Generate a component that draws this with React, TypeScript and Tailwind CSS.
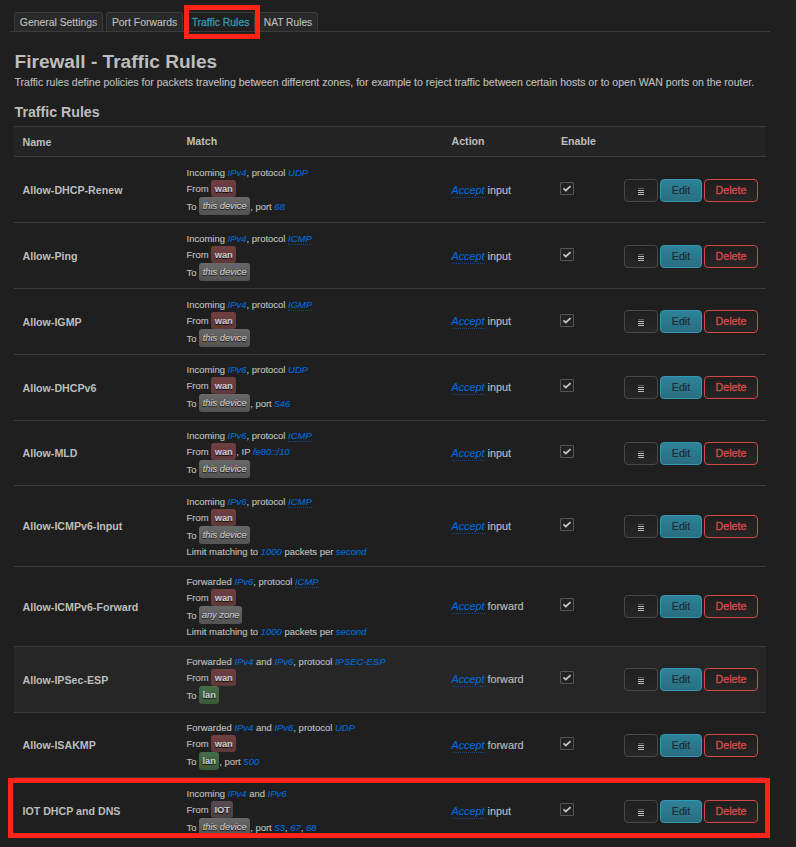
import React from "react";

type Part = string | { v: string; tip?: boolean } | { zone: "wan" | "lan" | "IOT" | "this device" | "any zone" };
type Rule = { name: string; h: string; top: string; act: string; chk: string; lines: Part[][]; target: string; hover?: boolean };

const v4 = { v: "IPv4" };
const v6 = { v: "IPv6" };
const icmp = { v: "ICMP", tip: true };
const wan: Part[] = ["From ", { zone: "wan" }];
const device: Part[] = ["To ", { zone: "this device" }];
const limit: Part[] = ["Limit matching to ", { v: "1000" }, " packets per ", { v: "second" }];

const rules: Rule[] = [
  { name: "Allow-DHCP-Renew", h: "h-[66px]", top: "pt-[7px]", act: "pt-[2px]", chk: "pb-[2px]", target: "input", lines: [["Incoming ", v4, ", protocol ", { v: "UDP" }], wan, [...device, ", port ", { v: "68" }]] },
  { name: "Allow-Ping", h: "h-[66px]", top: "pt-[7px]", act: "pt-[2px]", chk: "pb-[2px]", target: "input", lines: [["Incoming ", v4, ", protocol ", icmp], wan, device] },
  { name: "Allow-IGMP", h: "h-[66px]", top: "pt-[7px]", act: "pt-0", chk: "pb-[2px]", target: "input", lines: [["Incoming ", v4, ", protocol ", { v: "IGMP", tip: true }], wan, device] },
  { name: "Allow-DHCPv6", h: "h-[66px]", top: "pt-[6px]", act: "pt-0", chk: "pb-1", target: "input", lines: [["Incoming ", v6, ", protocol ", { v: "UDP" }], wan, [...device, ", port ", { v: "546" }]] },
  { name: "Allow-MLD", h: "h-[65px]", top: "pt-[6px]", act: "pt-px", chk: "pb-[3px]", target: "input", lines: [["Incoming ", v6, ", protocol ", icmp], [...wan, ", IP ", { v: "fe80::/10" }], device] },
  { name: "Allow-ICMPv6-Input", h: "h-[81px]", top: "pt-[7px]", act: "pt-px", chk: "pb-[3px]", target: "input", lines: [["Incoming ", v6, ", protocol ", icmp], wan, device, limit] },
  { name: "Allow-ICMPv6-Forward", h: "h-[80px]", top: "pt-[6px]", act: "pt-0", chk: "pb-1", target: "forward", lines: [["Forwarded ", v6, ", protocol ", icmp], wan, ["To ", { zone: "any zone" }], limit] },
  { name: "Allow-IPSec-ESP", h: "h-[66px]", top: "pt-[6px]", act: "pt-0", chk: "pb-1", target: "forward", hover: true, lines: [["Forwarded ", v4, " and ", v6, ", protocol ", { v: "IPSEC-ESP" }], wan, ["To ", { zone: "lan" }]] },
  { name: "Allow-ISAKMP", h: "h-[65px]", top: "pt-[6px]", act: "pt-px", chk: "pb-[3px]", target: "forward", lines: [["Forwarded ", v4, " and ", v6, ", protocol ", { v: "UDP" }], wan, ["To ", { zone: "lan" }, ", port ", { v: "500" }]] },
  { name: "IOT DHCP and DNS", h: "h-[67px]", top: "pt-[7px]", act: "pt-px", chk: "pb-[3px]", target: "input", lines: [["Incoming ", v4, " and ", v6], ["From ", { zone: "IOT" }], [...device, ", port ", { v: "53" }, ", ", { v: "67" }, ", ", { v: "68" }]] },
];

const zoneStyle = {
  wan: "w-[25px] font-bold from-[#713f3f] to-[#5e3939]",
  lan: "w-[20px] font-bold from-[#456b47] to-[#385a3a]",
  IOT: "w-[22px] font-bold from-[#594a54] to-[#4b3f48]",
  "this device": "w-[51px] italic from-[#686868] to-[#535353]",
  "any zone": "w-[43px] italic from-[#686868] to-[#535353]",
};
const lineHeights = ["h-4", "h-[17px]", "h-[18px]", "h-[14px]"];

function Piece({ part }: { part: Part }) {
  if (typeof part === "string") return <span className="leading-[11px]">{part}</span>;
  if ("zone" in part)
    return (
      <span className={`flex h-full shrink-0 items-center justify-center rounded-[3px] bg-linear-to-b pt-px text-[9.3px] leading-[11px] text-[#c8c8c8] [text-shadow:0_1px_1px_#000] ${zoneStyle[part.zone]}`}>
        {part.zone}
      </span>
    );
  return (
    <em className={`leading-[11px] text-[#0069d6] ${part.tip ? "-mb-px border-b border-dotted border-[#0f4a88]" : ""}`}>{part.v}</em>
  );
}

function Row({ rule }: { rule: Rule }) {
  return (
    <div
      className={`grid grid-cols-[172.5px_265px_108.5px_64px_1fr] border-t border-[#3b3b3b] ${rule.h} ${rule.hover ? "bg-[#262626]" : ""}`}
    >
      <div className="flex items-center pt-[2px] pl-[8.5px] text-[10.65px] font-bold">{rule.name}</div>
      <div className={`text-[9.47px] [-webkit-text-stroke:0.15px] ${rule.top}`}>
        {rule.lines.map((line, i) => (
          <div key={i} className={`flex items-center whitespace-pre ${lineHeights[i]}`}>
            {line.map((p, j) => (
              <Piece key={j} part={p} />
            ))}
          </div>
        ))}
      </div>
      <div className={`flex items-center text-[10.8px] whitespace-pre [-webkit-text-stroke:0.15px] ${rule.act}`}>
        <em className="mt-px border-b border-dotted border-[#0f4a88] leading-[13px] text-[#0069d6]">Accept</em>
        <span>{" " + rule.target}</span>
      </div>
      <div className={`flex items-center ${rule.chk}`}>
        <span className="flex h-[13px] w-[14px] items-center justify-center rounded-[1px] border border-[#545454] bg-[#222]">
          <svg className="h-[8px] w-[10px]" viewBox="0 0 10 8" fill="none" stroke="#c4c4c4" strokeWidth="1.8">
            <path d="M1.5 3.4 3.8 5.5 8.6 1.2" />
          </svg>
        </span>
      </div>
      <div className={`flex items-center gap-[2px] text-[10.7px] [-webkit-text-stroke:0.2px] ${rule.act}`}>
        <span className="flex h-[23px] w-[34px] items-center justify-center rounded-[4px] border border-[#494949] bg-linear-to-b from-[#1f1f1f] to-[#262626]">
          <svg className="mt-px h-[7px] w-[6px]" viewBox="0 0 6 7" stroke="#bdbdbd">
            <path d="M0 .5h6" strokeWidth="1" strokeOpacity=".4" />
            <path d="M0 2.5h6M0 4.5h6M0 6.5h6" strokeWidth="1" />
          </svg>
        </span>
        <span className="flex h-[23px] w-[42px] items-center justify-center rounded-[4px] border border-[#3597b3] bg-linear-to-b from-[#2f8299] to-[#296e80] text-[#1b2d33]">
          Edit
        </span>
        <span className="flex h-[23px] w-[54px] items-center justify-center rounded-[4px] border border-[#d04a4a] bg-linear-to-b from-[#1f1f1f] to-[#262626] text-[#d04a4a] [-webkit-text-stroke:0.35px]">
          Delete
        </span>
      </div>
    </div>
  );
}

export default function App() {
  const tab = "flex h-[19px] items-center justify-center rounded-t-[3px] border border-b-0 border-[#3b3b3b] pt-[2px]";
  return (
    <div className="relative h-[847px] w-[796px] overflow-hidden bg-[#1f1f1f] font-['Liberation_Sans',Arial,sans-serif] text-[#bdbdbd]">
      <nav className="ml-[10px] flex h-8 w-[760px] items-end border-b border-[#3b3b3b] pl-1 text-[10.4px] [-webkit-text-stroke:0.15px]">
        <span className={`${tab} w-[89px] bg-[#292929]`}>General Settings</span>
        <span className={`${tab} ml-[3px] w-[77px] bg-[#292929]`}>Port Forwards</span>
        <span className={`${tab} ml-[2px] w-[70px] bg-[#1f1f1f] pl-px text-[#3597b3] [-webkit-text-stroke:0.3px]`}>Traffic Rules</span>
        <span className={`${tab} ml-[2px] w-[61px] bg-[#292929] pl-px text-[10.2px]`}>NAT Rules</span>
      </nav>
      <main className="ml-[14px] w-[752px]">
        <h1 className="mt-[18px] h-6 pl-[0.5px] text-[19.1px] leading-6 font-bold">Firewall - Traffic Rules</h1>
        <p className="h-4 pl-[0.5px] text-[10.54px] leading-4 whitespace-nowrap [-webkit-text-stroke:0.15px]">
          Traffic rules define policies for packets traveling between different zones, for example to reject traffic between certain hosts or to open WAN ports on the router.
        </p>
        <h2 className="mt-[13px] h-[23px] pl-[0.5px] text-[14.2px] leading-[18px] font-bold">Traffic Rules</h2>
        <div className="grid h-[30px] grid-cols-[172.5px_265px_109.5px_1fr] items-center border-t border-[#3b3b3b] bg-[#242424] text-[10.65px] font-bold">
          <span className="pt-[2px] pl-[8.5px]">Name</span>
          <span>Match</span>
          <span>Action</span>
          <span>Enable</span>
        </div>
        {rules.map((r) => (
          <Row key={r.name} rule={r} />
        ))}
      </main>
      <div className="absolute top-[5px] left-[184px] h-[34px] w-[76px] border-[5px] border-[#ff2318]" />
      <div className="absolute top-[778px] left-2 h-[60px] w-[762px] border-[5px] border-[#ff2318]" />
      <div className="absolute top-[838px] left-0 h-[9px] w-full bg-[#1f1f1f]" />
    </div>
  );
}
